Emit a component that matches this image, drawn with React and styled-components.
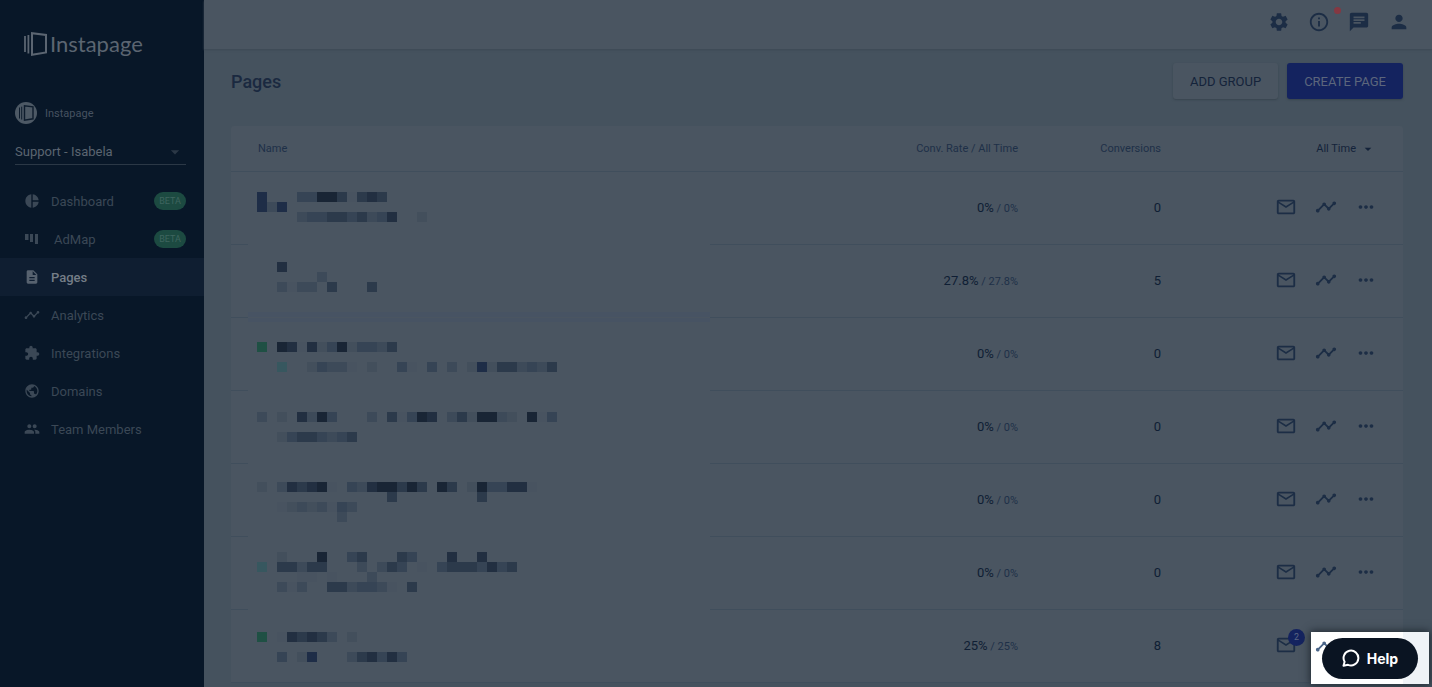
import React from "react";
import styled, { createGlobalStyle } from "styled-components";
import {
  MdArrowDropDown,
  MdChat,
  MdDescription,
  MdExtension,
  MdInfoOutline,
  MdMailOutline,
  MdMoreHoriz,
  MdPeople,
  MdPerson,
  MdPieChart,
  MdPublic,
  MdSettings,
  MdTimeline,
} from "react-icons/md";

const GlobalStyle = createGlobalStyle`
  * {
    box-sizing: border-box;
  }

  body {
    margin: 0;
    background: #45525e;
    font-family: Roboto, "Liberation Sans", sans-serif;
    overflow: hidden;
  }

  button, select {
    font-family: inherit;
  }
`;

const Layout = styled.div`
  display: flex;
  height: 100vh;
  overflow: hidden;
`;

const Sidebar = styled.aside`
  flex: 0 0 204px;
  background: #081728;
`;

const Logo = styled.a`
  display: flex;
  align-items: center;
  gap: 3px;
  height: 24px;
  margin: 32px 0 0 24px;
  color: #5b6571;
  font-family: Lato, sans-serif;
  font-size: 22px;
  line-height: 24px;
  text-decoration: none;
`;

const Account = styled.div`
  display: flex;
  align-items: center;
  gap: 8px;
  height: 22px;
  margin: 46px 0 0 15px;
  color: #465260;
  font-size: 11px;
`;

const WorkspaceField = styled.label`
  display: flex;
  align-items: center;
  position: relative;
  height: 25px;
  margin: 16px 18px 0 15px;
  border-bottom: 1px solid #2b3846;
  color: #2b3846;

  svg {
    position: absolute;
    right: 1px;
    pointer-events: none;
  }
`;

const WorkspaceSelect = styled.select`
  width: 100%;
  padding: 0 0 2px;
  border: none;
  outline: none;
  appearance: none;
  background: transparent;
  color: #5b6570;
  font-size: 13px;
`;

const NavList = styled.nav`
  margin-top: 17px;
`;

const NavItem = styled.a`
  display: flex;
  align-items: center;
  gap: 11px;
  height: 38px;
  padding: 0 18px 0 24px;
  background: ${({ $active }) => ($active ? "#0f1e31" : "transparent")};
  color: ${({ $active }) => ($active ? "#747d87" : "#3b4856")};
  font-size: 13px;
  font-weight: ${({ $active }) => ($active ? 500 : 400)};
  text-decoration: none;

  svg {
    color: ${({ $active }) => ($active ? "#57626f" : "#3b4856")};
  }
`;

const Beta = styled.span`
  margin-left: auto;
  width: 32px;
  border-radius: 9px;
  background: #1c4a41;
  color: #3f655f;
  font-size: 9px;
  line-height: 18px;
  text-align: center;
`;

const Main = styled.main`
  flex: 1;
  min-width: 0;
`;

const TopBar = styled.header`
  display: flex;
  align-items: center;
  justify-content: flex-end;
  gap: 18px;
  height: 49px;
  padding: 0 22px 5px;
  background: #4a5561;
  box-shadow: 0 1px 2px #3c4854;
`;

const IconButton = styled.button`
  display: flex;
  position: relative;
  padding: 0;
  border: none;
  background: none;
  color: #1c2d45;
  cursor: pointer;
`;

const AlertDot = styled.span`
  position: absolute;
  top: -4px;
  right: -11px;
  width: 7px;
  height: 7px;
  border-radius: 50%;
  background: #853842;
`;

const Content = styled.div`
  padding: 14px 29px 0 27px;
`;

const Heading = styled.div`
  display: flex;
  align-items: center;
  gap: 9px;
  height: 36px;
`;

const Title = styled.h1`
  flex: 1;
  margin: 0;
  color: #1a2940;
  font-size: 18px;
  font-weight: 500;
`;

const Button = styled.button`
  height: 36px;
  padding: 0 17px;
  border: none;
  border-radius: 3px;
  background: ${({ $primary }) => ($primary ? "#14235f" : "#4a5561")};
  box-shadow: 0 1px 2px #38444f;
  color: ${({ $primary }) => ($primary ? "#5c667c" : "#14233a")};
  font-size: 13px;
  cursor: pointer;
`;

const Card = styled.section`
  margin-top: 27px;
  border-radius: 3px 3px 0 0;
  background: #4a5561;
`;

const Table = styled.table`
  width: 100%;
  border-collapse: separate;
  border-spacing: 0;
  table-layout: fixed;
`;

const Th = styled.th`
  width: ${({ $width }) => $width || "auto"};
  height: 46px;
  padding: ${({ $pad }) => $pad || "0"};
  border-bottom: 1px solid #404e5c;
  color: #1e3048;
  font-size: 11px;
  font-weight: 400;
  text-align: ${({ $align }) => $align || "right"};
`;

const RangeButton = styled.button`
  display: inline-flex;
  align-items: center;
  gap: 4px;
  padding: 0;
  border: none;
  background: none;
  color: #14233a;
  font-size: 11px;
  vertical-align: middle;
`;

const Td = styled.td`
  height: 73px;
  padding: 0 0 2px;
  border-bottom: 1px solid #404e5c;
  color: #1e3048;
  font-size: 11px;
  text-align: right;
`;

// the divider stops short of the redacted name
const NameTd = styled.td`
  height: 73px;
  padding: 0 0 0 17px;
  background: linear-gradient(#404e5c, #404e5c) left bottom / ${({ $last }) => ($last ? "100%" : "17px")} 1px no-repeat;
  vertical-align: top;

  svg {
    display: block;
  }
`;

const Rate = styled.span`
  color: #0f1e34;
  font-size: 13px;
`;

const Actions = styled.div`
  display: flex;
  justify-content: flex-end;
  gap: 18px;
  padding-right: 26px;
`;

const Count = styled.span`
  position: absolute;
  top: -5px;
  right: -8px;
  width: 17px;
  border-radius: 50%;
  background: #14235f;
  color: #5b6683;
  font-size: 9px;
  line-height: 17px;
  text-align: center;
`;

const Spotlight = styled.div`
  display: flex;
  align-items: center;
  justify-content: center;
  position: fixed;
  right: 3px;
  bottom: 3px;
  width: 118px;
  height: 52px;
  background: linear-gradient(90deg, #ffffff 92px, #eff3f7 92px);
  box-shadow: 0 0 8px 1px #1f2831;
  color: #4a6588;
`;

const SpotlightTrend = styled(MdTimeline)`
  position: absolute;
  top: 3px;
  left: 4px;
`;

const HelpButton = styled.button`
  display: flex;
  align-items: center;
  justify-content: center;
  gap: 7px;
  position: relative;
  width: 96px;
  height: 41px;
  border: none;
  border-radius: 21px;
  background: #0a1422;
  color: #ffffff;
  font-family: Inter, sans-serif;
  font-size: 14px;
  font-weight: 700;
  cursor: pointer;
`;

function BookMark() {
  return (
    <svg width="23" height="24" viewBox="0 0 23 24" fill="none" stroke="currentColor">
      <path d="M1 4v16" strokeWidth="1.8" />
      <path d="M4.4 3v18.5" strokeWidth="1.8" />
      <path d="M8 1.200v21.600l14-2.400V3z" strokeWidth="2" />
    </svg>
  );
}

function Avatar() {
  return (
    <svg width="22" height="22" viewBox="0 0 22 22">
      <circle cx="11" cy="11" r="11" fill="#4d5965" />
      <g fill="none" stroke="#0d1c2d">
        <path d="M4.5 5.5v11M6.7 4.7v12.8" strokeWidth="1" />
        <path d="M9.5 3.8v14.4l8.5-1.4V4.8z" strokeWidth="1.4" />
      </g>
    </svg>
  );
}

function AdMapIcon() {
  return (
    <svg width="19" height="16" viewBox="0 0 19 16" fill="currentColor">
      <path d="M1 3h3.500v6H1zM6 3h3v8H6zM11 3h3v10h-3z" />
    </svg>
  );
}

function BubbleIcon() {
  return (
    <svg width="18" height="18" viewBox="0 0 18 18" fill="none" stroke="currentColor" strokeWidth="2">
      <path d="M1.500 16.700 2.600 12.800A7.400 7.400 0 1 1 6 15.800z" strokeLinejoin="round" />
    </svg>
  );
}

const links = [
  { label: "Dashboard", icon: <MdPieChart size={16} />, beta: true },
  { label: "AdMap", icon: <AdMapIcon />, beta: true },
  { label: "Pages", icon: <MdDescription size={16} />, active: true },
  { label: "Analytics", icon: <MdTimeline size={16} /> },
  { label: "Integrations", icon: <MdExtension size={16} /> },
  { label: "Domains", icon: <MdPublic size={16} /> },
  { label: "Team Members", icon: <MdPeople size={16} /> },
];

const shades = {
  1: "#485360",
  2: "#434f5c",
  3: "#3d4a59",
  4: "#364455",
  5: "#2c3a4b",
  6: "#222f41",
  7: "#192535",
  b: "#1e2d47",
  g: "#1f5044",
  t: "#37575f",
};

// each line is [y, cells]: one character per 10px block, a dot is empty
const rows = [
  { rate: "0%", total: 0, blocks: [[20, "b...447751565"], [30, "b3b"], [40, "....3445545346..2"]] },
  { rate: "27.8%", total: 5, blocks: [[17, "..6"], [27, "......3"], [37, "..3133.5...5"]], band: [67, 6] },
  { rate: "0%", total: 0, blocks: [[24, "g.761624724435"], [44, "..t..24331.2..41.4.3.2b2553435"]], band: [0, 4] },
  { rate: "0%", total: 0, blocks: [[21, "3.2.6374...3.51476.3527732.714"], [41, "..24554345"]] },
  {
    rate: "0%",
    total: 0,
    blocks: [
      [18, "2.365671.43677575.75.2744661"],
      [28, ".............5........5"],
      [38, "..12323143"],
      [48, "........3"],
    ],
  },
  {
    rate: "0%",
    total: 0,
    blocks: [
      [15, "..2...7..45...54...6..6"],
      [25, "t.55355...3.354.1.45554645"],
      [35, "....11.1...3"],
      [45, "..313..5534431.5"],
    ],
  },
  { rate: "25%", total: 8, blocks: [[22, "g.165653.2"], [42, "..4.2b...356464"]], count: 2 },
];

function Redacted({ lines, band }) {
  return (
    <svg width="462" height="72" viewBox="-9 0 462 72" shapeRendering="crispEdges">
      {band && <rect x="-9" y={band[0]} width="462" height={band[1]} fill="#475363" />}
      {lines.map(([y, cells]) =>
        [...cells].map((c, i) =>
          shades[c] ? <rect key={`${y}-${i}`} x={i * 10} y={y} width="10" height="10" fill={shades[c]} /> : null
        )
      )}
    </svg>
  );
}

function App() {
  return (
    <>
      <GlobalStyle />
      <Layout>
        <Sidebar>
          <Logo href="#">
            <BookMark />
            Instapage
          </Logo>
          <Account>
            <Avatar />
            Instapage
          </Account>
          <WorkspaceField>
            <WorkspaceSelect aria-label="Workspace">
              <option>Support - Isabela</option>
            </WorkspaceSelect>
            <MdArrowDropDown size={20} />
          </WorkspaceField>
          <NavList>
            {links.map((link) => (
              <NavItem key={link.label} href="#" $active={link.active}>
                {link.icon}
                {link.label}
                {link.beta && <Beta>BETA</Beta>}
              </NavItem>
            ))}
          </NavList>
        </Sidebar>

        <Main>
          <TopBar>
            <IconButton aria-label="Settings"><MdSettings size={22} /></IconButton>
            <IconButton aria-label="Information">
              <MdInfoOutline size={22} />
              <AlertDot />
            </IconButton>
            <IconButton aria-label="Messages"><MdChat size={22} /></IconButton>
            <IconButton aria-label="Profile"><MdPerson size={22} /></IconButton>
          </TopBar>

          <Content>
            <Heading>
              <Title>Pages</Title>
              <Button>ADD GROUP</Button>
              <Button $primary>CREATE PAGE</Button>
            </Heading>

            <Card>
              <Table>
                <thead>
                  <tr>
                    <Th $width="479px" $align="left" $pad="0 0 0 27px">Name</Th>
                    <Th>Conv. Rate / All Time</Th>
                    <Th $width="143px">Conversions</Th>
                    <Th $width="242px" $pad="0 27px 0 0">
                      <RangeButton>
                        All Time
                        <MdArrowDropDown size={16} />
                      </RangeButton>
                    </Th>
                  </tr>
                </thead>
                <tbody>
                  {rows.map((row, i) => (
                    <tr key={i}>
                      <NameTd $last={i === rows.length - 1}>
                        <Redacted lines={row.blocks} band={row.band} />
                      </NameTd>
                      <Td><Rate>{row.rate}</Rate> / {row.rate}</Td>
                      <Td><Rate>{row.total}</Rate></Td>
                      <Td>
                        <Actions>
                          <IconButton aria-label="Leads">
                            <MdMailOutline size={22} />
                            {row.count && <Count>{row.count}</Count>}
                          </IconButton>
                          <IconButton aria-label="Analytics"><MdTimeline size={22} /></IconButton>
                          <IconButton aria-label="More"><MdMoreHoriz size={22} /></IconButton>
                        </Actions>
                      </Td>
                    </tr>
                  ))}
                </tbody>
              </Table>
            </Card>
          </Content>
        </Main>
      </Layout>

      <Spotlight>
        <SpotlightTrend size={22} />
        <HelpButton>
          <BubbleIcon />
          Help
        </HelpButton>
      </Spotlight>
    </>
  );
}

export default App;
